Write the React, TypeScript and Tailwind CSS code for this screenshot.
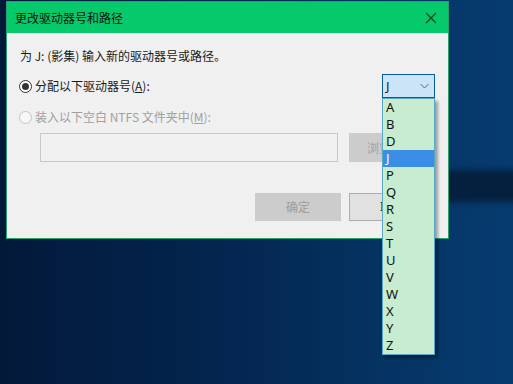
import React from 'react';

const letters = ['A', 'B', 'D', 'J', 'P', 'Q', 'R', 'S', 'T', 'U', 'V', 'W', 'X', 'Y', 'Z'];

const font = { fontFamily: '"Noto Sans CJK SC", "Noto Sans", sans-serif' };

const Radio: React.FC<{ checked?: boolean; disabled?: boolean }> = ({ checked, disabled }) => (
    <span
        className={`flex items-center justify-center w-[13px] h-[13px] rounded-full border ${
            disabled ? 'border-[#c4c4c4] bg-[#f7f7f7]' : 'border-[#333333] bg-white'
        }`}
    >
        {checked && <span className="w-[7px] h-[7px] rounded-full bg-[#333333]" />}
    </span>
);

const App: React.FC = () => {
    return (
        <div
            className="relative w-[513px] h-[384px] overflow-hidden bg-[linear-gradient(90deg,#03193a_0%,#042650_45%,#053566_80%,#073c70_100%)] text-[12px] leading-[16px] text-[#1a1a1a]"
            style={font}
        >
            {/* dark streak on the desktop */}
            <div className="absolute left-[440px] top-[170px] w-[80px] h-[32px] bg-[#04203e] blur-[3px]" />

            {/* dialog window */}
            <div className="absolute left-[6px] top-[1px] w-[443px] h-[238px] border border-[#25a36f] bg-[#f0f0f0] flex flex-col">
                <div className="h-[31px] bg-[#05c96b] flex items-center justify-between pl-[8px] pr-[10px]">
                    <span className="text-[12px] text-[#111]">更改驱动器号和路径</span>
                    <svg width="12" height="12" viewBox="0 0 12 12" className="mr-[1px]">
                        <path d="M1 1 L11 11 M11 1 L1 11" stroke="#1d3b2a" strokeWidth="1.1" />
                    </svg>
                </div>

                <div className="flex flex-col pl-[12px] pr-[13px]">
                    <div className="mt-[15px] pl-[1px]">为 J: (影集) 输入新的驱动器号或路径。</div>

                    <div className="mt-[10px] flex items-center justify-between h-[24px]">
                        <label className="flex items-center gap-[3px]">
                            <Radio checked />
                            <span>
                                分配以下驱动器号(<span className="underline">A</span>):
                            </span>
                        </label>

                        <div className="relative">
                            <div className="w-[53px] h-[24px] border border-[#0a5aa0] bg-[#cce4f7] flex items-center justify-between pl-[3px] pr-[5px]">
                                <span className="text-[13px]" style={{ fontFamily: '"Noto Sans", sans-serif' }}>J</span>
                                <svg width="9" height="6" viewBox="0 0 9 6">
                                    <path d="M0.5 1 L4.5 5 L8.5 1" fill="none" stroke="#5a6670" strokeWidth="1" />
                                </svg>
                            </div>
                            <div
                                className="absolute left-0 top-[24px] w-[53px] border border-[#5aa8c8] bg-[#c7ecd0] shadow-[3px_3px_3px_rgba(0,0,0,0.35)] z-10"
                                style={{ fontFamily: '"Noto Sans", sans-serif' }}
                            >
                                {letters.map((l) => (
                                    <div
                                        key={l}
                                        className={`h-[17px] pl-[3px] text-[13px] leading-[17px] ${
                                            l === 'J' ? 'bg-[#3a8ee6] text-white' : 'text-[#111]'
                                        }`}
                                    >
                                        {l}
                                    </div>
                                ))}
                            </div>
                        </div>
                    </div>

                    <label className="mt-[11px] flex items-center gap-[3px] text-[#a0a0a0]">
                        <Radio disabled />
                        <span>
                            装入以下空白 NTFS 文件夹中(<span className="underline">M</span>):
                        </span>
                    </label>

                    <div className="mt-[8px] flex items-center gap-[11px] pl-[21px]">
                        <div className="w-[298px] h-[29px] border border-[#c9c9c9] bg-[#f0f0f0]" />
                        <div className="w-[86px] h-[29px] bg-[#cccccc] text-[#a0a0a0] flex items-center justify-center">
                            浏览(<span className="underline">R</span>)...
                        </div>
                    </div>

                    <div className="mt-[31px] flex justify-end gap-[8px]">
                        <div className="w-[86px] h-[28px] bg-[#cccccc] text-[#9d9d9d] flex items-center justify-center">
                            确定
                        </div>
                        <div className="w-[86px] h-[28px] border border-[#adadad] bg-[#e1e1e1] flex items-center justify-center">
                            取消
                        </div>
                    </div>
                </div>
            </div>
        </div>
    );
};

export default App;
